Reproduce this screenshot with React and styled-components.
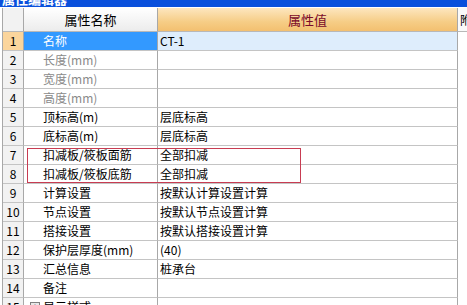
import React from 'react'
import styled, { createGlobalStyle } from 'styled-components'

const Global = createGlobalStyle`
  html, body {
    margin: 0;
    padding: 0;
    background: #fff;
    overflow: hidden;
  }
  body {
    font-family: "Noto Sans CJK SC", "Noto Sans", sans-serif;
    font-size: 12px;
  }
`

const rows = [
  { name: '名称', value: 'CT-1', selected: true },
  { name: '长度(mm)', value: '', muted: true },
  { name: '宽度(mm)', value: '', muted: true },
  { name: '高度(mm)', value: '', muted: true },
  { name: '顶标高(m)', value: '层底标高' },
  { name: '底标高(m)', value: '层底标高' },
  { name: '扣减板/筱板面筋', value: '全部扣减' },
  { name: '扣减板/筱板底筋', value: '全部扣减' },
  { name: '计算设置', value: '按默认计算设置计算' },
  { name: '节点设置', value: '按默认节点设置计算' },
  { name: '搭接设置', value: '按默认搭接设置计算' },
  { name: '保护层厚度(mm)', value: '(40)' },
  { name: '汇总信息', value: '桩承台' },
  { name: '备注', value: '' },
]

export default function App() {
  return (
    <Page>
      <Global />
      <TitleBar><span>属性编辑器</span></TitleBar>
      <Grid>
        <HeaderRow>
          <NumHead />
          <NameHead>属性名称</NameHead>
          <ValueHead>属性值</ValueHead>
          <ExtraHead>附加</ExtraHead>
        </HeaderRow>
        {rows.map((r, i) => (
          <Row key={i}>
            <NumCell $active={r.selected}>{i + 1}</NumCell>
            <NameCell $selected={r.selected} $muted={r.muted}>{r.name}</NameCell>
            <ValueCell $selected={r.selected}>{r.value}</ValueCell>
            <ExtraCell />
          </Row>
        ))}
        <Row>
          <NumCell>15</NumCell>
          <NameCell $tight>
            <Expander>+</Expander>
            显示样式
          </NameCell>
          <ValueCell />
          <ExtraCell />
        </Row>
      </Grid>
      <Highlight />
    </Page>
  )
}

const Page = styled.div`
  position: relative;
  width: 467px;
  height: 305px;
  overflow: hidden;
`

const TitleBar = styled.div`
  height: 7px;
  background: #0a50dc;
  overflow: hidden;
  border-bottom: 1px solid #fff;
  span {
    display: block;
    margin-top: -8px;
    padding-left: 2px;
    color: #fff;
    font-size: 13px;
    line-height: 14px;
    font-weight: bold;
  }
`

const Grid = styled.div`
  margin-left: 2px;
  border-left: 1px solid #a8a8a8;
`

const Row = styled.div`
  display: grid;
  grid-template-columns: 21px 134px 300px 1fr;
  height: 19px;
`

const HeaderRow = styled(Row)`
  height: 24px;
`

const Cell = styled.div`
  box-sizing: border-box;
  border-right: 1px solid #a8a8a8;
  border-bottom: 1px solid #c4c4c4;
  display: flex;
  align-items: center;
  white-space: nowrap;
  overflow: hidden;
  line-height: 18px;
  color: #000;
`

const NumHead = styled(Cell)`
  background: #f2f2f2;
  border-bottom-color: #b8b8b8;
`

const NameHead = styled(Cell)`
  justify-content: center;
  font-size: 13px;
  background: linear-gradient(#ffffff, #ececec);
  border-bottom-color: #b8b8b8;
`

const ValueHead = styled(Cell)`
  justify-content: center;
  font-size: 13px;
  color: #7a0a2a;
  background: linear-gradient(#fde6bf, #f6cd86 60%, #f3c070);
  border-bottom-color: #b8b8b8;
`

const ExtraHead = styled(Cell)`
  background: #fafafa;
  padding-left: 2px;
  border-right: none;
  border-bottom-color: #b8b8b8;
`

const NumCell = styled(Cell)`
  justify-content: center;
  background: ${p => (p.$active ? '#fbd59c' : '#f2f2f2')};
  font-size: 12px;
`

const NameCell = styled(Cell)`
  padding-left: ${p => (p.$tight ? '6px' : '19px')};
  background: ${p => (p.$selected ? '#3399ff' : '#fff')};
  color: ${p => (p.$selected ? '#fff' : p.$muted ? '#8a8a8a' : '#000')};
`

const ValueCell = styled(Cell)`
  padding-left: 2px;
  background: ${p => (p.$selected ? '#deedfc' : '#fff')};
`

const ExtraCell = styled(Cell)`
  border-right: none;
  border-bottom: none;
`

const Expander = styled.span`
  box-sizing: border-box;
  width: 10px;
  height: 10px;
  margin-right: 3px;
  border: 1px solid #808080;
  background: #e8e8e8;
  font-size: 9px;
  line-height: 8px;
  text-align: center;
  color: #000;
`

const Highlight = styled.div`
  position: absolute;
  left: 27px;
  top: 148px;
  width: 272px;
  height: 33px;
  border: 1px solid #c83c52;
  pointer-events: none;
`
